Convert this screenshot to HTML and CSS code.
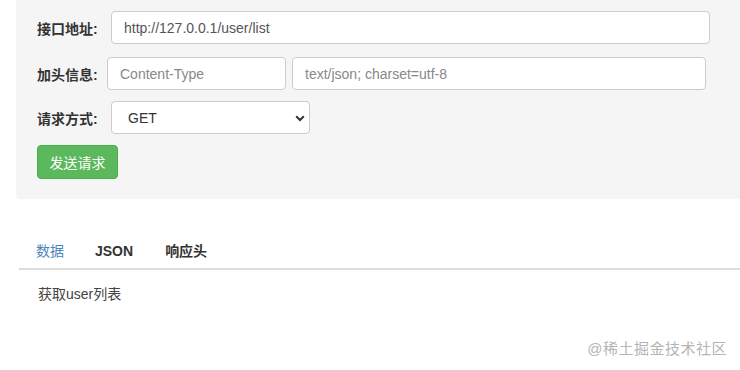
FILE: index.html
```html
<!DOCTYPE html>
<html lang="zh-CN">
<head>
  <meta charset="UTF-8">
  <meta name="viewport" content="width=device-width, initial-scale=1.0">
  <title>接口测试</title>
  <link rel="stylesheet" href="styles.css">
</head>
<body>
  <!-- Request Form -->
  <div class="panel">
    <div class="row row-url">
      <label class="label">接口地址:</label>
      <input type="text" class="field url-field" value="http://127.0.0.1/user/list">
    </div>
    <div class="row">
      <label class="label label-narrow">加头信息:</label>
      <input type="text" class="field header-key" placeholder="Content-Type">
      <input type="text" class="field header-value" placeholder="text/json; charset=utf-8">
    </div>
    <div class="row">
      <label class="label">请求方式:</label>
      <div class="select-wrap">
        <select class="field method">
          <option>GET</option>
          <option>POST</option>
        </select>
        <svg class="chevron" width="10" height="7" viewBox="0 0 10 7">
          <path d="M1.2 1.2 L5 5 L8.8 1.2" fill="none" stroke="#333" stroke-width="2"/>
        </svg>
      </div>
    </div>
    <button class="send-button">发送请求</button>
  </div>

  <!-- Result Tabs -->
  <ul class="tabs">
    <li class="tab active">数据</li>
    <li class="tab">JSON</li>
    <li class="tab">响应头</li>
  </ul>
  <p class="result">获取user列表</p>

  <div class="watermark">@稀土掘金技术社区</div>
</body>
</html>
```

FILE: styles.css
```css
body {
  margin: 0;
  font-family: "Liberation Sans", "Noto Sans CJK SC", sans-serif;
  font-size: 14px;
  color: #333;
  background-color: #fff;
}
.panel {
  margin-left: 16px;
  padding: 11px 0 20px 21px;
  background-color: #f5f5f5;
  border-radius: 0 0 0 4px;
}
.row {
  display: flex;
  align-items: center;
  margin-bottom: 11px;
}
.row-url {
  margin-bottom: 13px;
}
.label {
  width: 74px;
  font-weight: bold;
  color: #333;
}
.label-narrow {
  width: 70px;
}
.field {
  box-sizing: border-box;
  height: 33px;
  padding: 0 12px;
  font-family: "Liberation Sans", sans-serif;
  font-size: 14px;
  color: #555;
  background-color: #fff;
  border: 1px solid #ccc;
  border-radius: 4px;
  outline: none;
}
.field::placeholder {
  color: #888;
}
.url-field {
  width: 599px;
}
.header-key {
  width: 179px;
  margin-right: 6px;
}
.header-value {
  width: 414px;
}
.select-wrap {
  position: relative;
}
.method {
  width: 199px;
  padding-left: 16px;
  appearance: none;
  -webkit-appearance: none;
  color: #333;
}
.chevron {
  position: absolute;
  right: 5px;
  top: 14px;
}
.send-button {
  display: block;
  width: 81px;
  height: 34px;
  padding: 0;
  font-family: "Liberation Sans", "Noto Sans CJK SC", sans-serif;
  font-size: 14px;
  color: #fff;
  background-color: #5cb85c;
  border: 1px solid #4cae4c;
  border-radius: 4px;
}
.tabs {
  display: flex;
  list-style-type: none;
  margin: 41px 0 0 19px;
  padding: 0;
  border-bottom: 2px solid #ddd;
}
.tab {
  padding: 0 16px 6px;
  line-height: 22px;
  font-weight: bold;
  color: #333;
}
.tab:first-child {
  padding-left: 17px;
  padding-right: 15px;
}
.tab.active {
  font-weight: normal;
  color: #4a86b8;
}
.result {
  margin: 13px 0 0 38px;
  color: #444;
}
.watermark {
  position: absolute;
  right: 13px;
  bottom: 12px;
  font-size: 15px;
  color: #b5b5b5;
  letter-spacing: 0.5px;
}
```
